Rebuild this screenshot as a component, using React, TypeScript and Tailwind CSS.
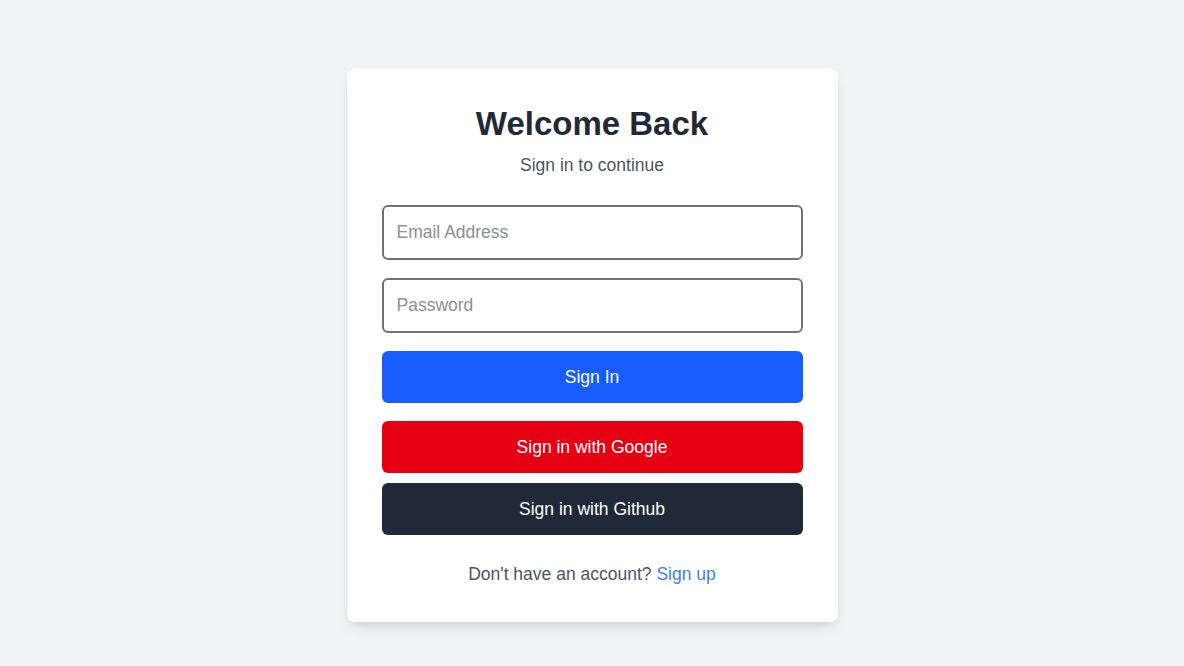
export default function App() {
  return (
    <div className="min-h-screen bg-[#f2f3f5] pt-[69px] font-['Liberation_Sans',Arial,sans-serif]">
      <div className="mx-auto w-[491px] rounded-lg bg-white px-[35px] pt-[35px] pb-[35px] shadow-[0_8px_16px_-4px_rgba(0,0,0,0.12),0_3px_6px_-2px_rgba(0,0,0,0.06)]">
        <h1 className="text-center text-[33px] font-bold leading-[40px] text-[#1f2937]">
          Welcome Back
        </h1>
        <p className="mt-2 text-center text-[17.5px] leading-[26px] text-[#4b5563]">
          Sign in to continue
        </p>

        <form className="mt-[27px] flex flex-col" onSubmit={(e) => e.preventDefault()}>
          <input
            type="email"
            placeholder="Email Address"
            className="h-[55px] w-full rounded-md border-2 border-[#717171] px-[13px] text-[17.5px] text-gray-800 outline-none placeholder:text-[#8a8f98]"
          />
          <input
            type="password"
            placeholder="Password"
            className="mt-[18px] h-[55px] w-full rounded-md border-2 border-[#717171] px-[13px] text-[17.5px] text-gray-800 outline-none placeholder:text-[#8a8f98]"
          />
          <button
            type="submit"
            className="mt-[18px] h-[52px] w-full rounded-md bg-[#175dfd] text-[17.5px] font-medium text-white"
          >
            Sign In
          </button>
        </form>

        <button className="mt-[18px] h-[52px] w-full rounded-md bg-[#e60012] text-[17.5px] font-medium text-white">
          Sign in with Google
        </button>
        <button className="mt-[10px] h-[52px] w-full rounded-md bg-[#1f2937] text-[17.5px] font-medium text-white">
          Sign in with Github
        </button>

        <p className="mt-[26px] text-center text-[17.5px] leading-[26px] text-[#4b5563]">
          Don't have an account?{' '}
          <a href="#" className="text-[#3b82f6]">
            Sign up
          </a>
        </p>
      </div>
    </div>
  )
}
